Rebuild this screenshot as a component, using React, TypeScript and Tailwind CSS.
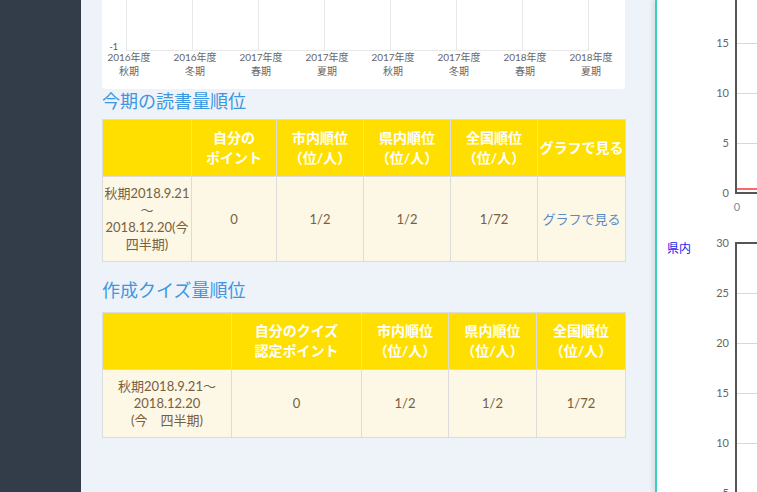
import React from 'react';

const font = 'Lato, "Noto Sans CJK JP", sans-serif';

// x-axis labels of the small period chart at the top
const periods = [
  { year: '2016年度', season: '秋期' },
  { year: '2016年度', season: '冬期' },
  { year: '2017年度', season: '春期' },
  { year: '2017年度', season: '夏期' },
  { year: '2017年度', season: '秋期' },
  { year: '2017年度', season: '冬期' },
  { year: '2018年度', season: '春期' },
  { year: '2018年度', season: '夏期' },
];

const PeriodChart: React.FC = () => {
  const xs = periods.map((_, i) => 24 + i * 66);
  return (
    <div className="bg-white rounded-b-[4px] h-[89px]">
      <svg width="523" height="89" style={{ fontFamily: font }}>
        {xs.map((x, i) => (
          <line key={i} x1={x + 0.5} y1={0} x2={x + 0.5} y2={50} stroke="#e8e8e8" />
        ))}
        <line x1={24} y1={50.5} x2={487} y2={50.5} stroke="#e8e8e8" />
        <text x={16} y={50} fontSize="9" fill="#555" textAnchor="end">-1</text>
        {periods.map((p, i) => (
          <g key={i}>
            <text x={xs[i] + 3} y={61} fontSize="10" fill="#666" textAnchor="middle">{p.year}</text>
            <text x={xs[i] + 3} y={75} fontSize="10" fill="#666" textAnchor="middle">{p.season}</text>
          </g>
        ))}
      </svg>
    </div>
  );
};

const th = 'border border-[#dcdcdc] bg-[#ffdf00] text-white font-bold text-[14px] leading-[20px] text-center whitespace-nowrap px-0 py-[8px] h-[57px]';
const td = 'border border-[#dcdcdc] bg-[#fdf7e5] text-[#76603f] text-[13px] leading-[17px] text-center whitespace-nowrap px-0 py-[8px]';

const RightChart: React.FC = () => {
  const axisX = 79;
  return (
    <svg width="100" height="492" style={{ fontFamily: font }}>
      {/* upper chart */}
      {[43, 93, 143].map((y) => (
        <line key={y} x1={axisX} y1={y + 0.5} x2={100} y2={y + 0.5} stroke="#d8d8d8" />
      ))}
      <line x1={axisX} y1={0} x2={axisX} y2={194} stroke="#555" strokeWidth="2" />
      <line x1={axisX - 1} y1={193} x2={100} y2={193} stroke="#555" strokeWidth="2" />
      <line x1={axisX + 1} y1={189} x2={100} y2={189} stroke="#ff6666" strokeWidth="2" />
      {[
        ['15', 43],
        ['10', 93],
        ['5', 143],
        ['0', 193],
      ].map(([t, y]) => (
        <text key={t} x={72} y={(y as number) + 4} fontSize="11" fill="#666" textAnchor="end">{t}</text>
      ))}
      <text x={80} y={211} fontSize="11" fill="#7a8aa0" textAnchor="middle">0</text>

      {/* label for second chart */}
      <text x={10} y={253} fontSize="12" fill="#2222ee">県内</text>

      {/* lower chart */}
      {[293, 343, 393, 443].map((y) => (
        <line key={y} x1={axisX} y1={y + 0.5} x2={100} y2={y + 0.5} stroke="#d8d8d8" />
      ))}
      <line x1={axisX - 1} y1={243} x2={100} y2={243} stroke="#555" strokeWidth="2" />
      <line x1={axisX} y1={242} x2={axisX} y2={492} stroke="#555" strokeWidth="2" />
      {[
        ['30', 243],
        ['25', 293],
        ['20', 343],
        ['15', 393],
        ['10', 443],
        ['5', 493],
      ].map(([t, y]) => (
        <text key={t} x={72} y={(y as number) + 4} fontSize="11" fill="#666" textAnchor="end">{t}</text>
      ))}
    </svg>
  );
};

const App: React.FC = () => {
  return (
    <div className="flex h-[492px] w-[757px] overflow-hidden" style={{ fontFamily: font }}>
      {/* sidebar */}
      <div className="w-[81px] shrink-0 bg-[#333d4a]" />

      {/* main content */}
      <div className="w-[574px] shrink-0 bg-[#eef2f9] pl-[21px] pr-[30px]">
        <PeriodChart />

        <h2 className="text-[18px] leading-[24px] text-[#3c97e0] mb-[6px]">今期の読書量順位</h2>
        <table className="table-fixed border-collapse w-[523px]">
          <colgroup>
            <col className="w-[89px]" />
            <col className="w-[85px]" />
            <col className="w-[87px]" />
            <col className="w-[87px]" />
            <col className="w-[87px]" />
            <col className="w-[88px]" />
          </colgroup>
          <thead>
            <tr>
              <th className={th}></th>
              <th className={th}>自分の<br />ポイント</th>
              <th className={th}>市内順位<br />（位/人）</th>
              <th className={th}>県内順位<br />（位/人）</th>
              <th className={th}>全国順位<br />（位/人）</th>
              <th className={th}>グラフで見る</th>
            </tr>
          </thead>
          <tbody>
            <tr>
              <td className={td}>秋期2018.9.21<br />～<br />2018.12.20(今<br />四半期)</td>
              <td className={td}>0</td>
              <td className={td}>1/2</td>
              <td className={td}>1/2</td>
              <td className={td}>1/72</td>
              <td className={td}><span className="text-[#5a8ac6]">グラフで見る</span></td>
            </tr>
          </tbody>
        </table>

        <h2 className="text-[18px] leading-[24px] text-[#3c97e0] mt-[16px] mb-[10px]">作成クイズ量順位</h2>
        <table className="table-fixed border-collapse w-[523px]">
          <colgroup>
            <col className="w-[129px]" />
            <col className="w-[130px]" />
            <col className="w-[87px]" />
            <col className="w-[88px]" />
            <col className="w-[89px]" />
          </colgroup>
          <thead>
            <tr>
              <th className={th}></th>
              <th className={th}>自分のクイズ<br />認定ポイント</th>
              <th className={th}>市内順位<br />（位/人）</th>
              <th className={th}>県内順位<br />（位/人）</th>
              <th className={th}>全国順位<br />（位/人）</th>
            </tr>
          </thead>
          <tbody>
            <tr>
              <td className={td}>秋期2018.9.21～<br />2018.12.20<br />(今　四半期)</td>
              <td className={td}>0</td>
              <td className={td}>1/2</td>
              <td className={td}>1/2</td>
              <td className={td}>1/72</td>
            </tr>
          </tbody>
        </table>
      </div>

      {/* right graph panel */}
      <div className="relative flex-1 bg-white border-l-2 border-[#34d0c4] shadow-[-3px_0_4px_rgba(0,0,0,0.08)]">
        <RightChart />
      </div>
    </div>
  );
};

export default App;
